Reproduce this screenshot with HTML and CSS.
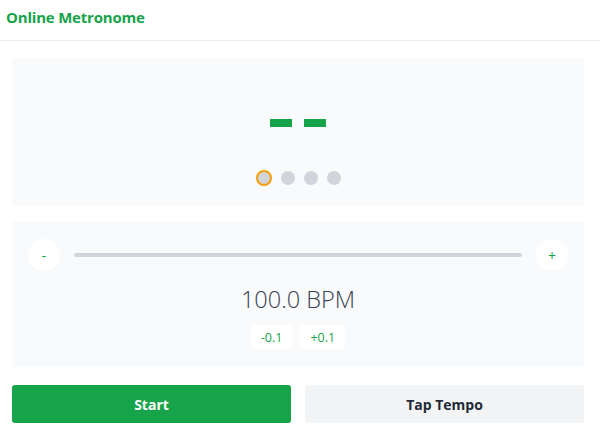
FILE: index.html
```html
<!DOCTYPE html>
<html>
<head>
<meta charset="utf-8">
<link rel="stylesheet" href="styles.css">
</head>
<body>
<header class="header"><h1 class="title">Online Metronome</h1></header>
<main class="main">
  <section class="panel beat-panel">
    <div class="dashes"><span class="dash"></span><span class="dash"></span></div>
    <div class="dots">
      <span class="dot active"></span><span class="dot"></span><span class="dot"></span><span class="dot"></span>
    </div>
  </section>
  <section class="panel tempo-panel">
    <div class="slider-row">
      <button class="round-btn">-</button>
      <div class="track"></div>
      <button class="round-btn">+</button>
    </div>
    <div class="bpm">100.0 BPM</div>
    <div class="fine">
      <button class="fine-btn">-0.1</button>
      <button class="fine-btn">+0.1</button>
    </div>
  </section>
  <div class="actions">
    <button class="btn start">Start</button>
    <button class="btn tap">Tap Tempo</button>
  </div>
</main>
</body>
</html>
```
FILE: styles.css
```css
* { box-sizing: border-box; }
html, body { margin: 0; padding: 0; background: #fff; }
body { font-family: "Open Sans", "Noto Sans", "Liberation Sans", sans-serif; color: #1f2937; width: 600px; height: 435px; overflow: hidden; }
.header { height: 41px; border-bottom: 1px solid #e8eaed; display: flex; align-items: center; padding-left: 6px; padding-bottom: 6px; }
.title { margin: 0; font-size: 15px; font-weight: 700; color: #16a34a; letter-spacing: -0.2px; }
.main { padding: 17px 16px 0 12px; display: flex; flex-direction: column; gap: 16px; }
.panel { background: #f9fafb; }
.beat-panel { height: 148px; display: flex; flex-direction: column; align-items: center; padding-top: 61px; }
.dashes { display: flex; gap: 12px; }
.dash { width: 22px; height: 8px; background: #16a34a; }
.dots { display: flex; gap: 9px; margin-top: 44px; }
.dot { width: 14px; height: 14px; border-radius: 50%; background: #d1d5db; }
.dot.active { width: 16px; height: 16px; border: 2px solid #f59e0b; margin-top: -1px; }
.tempo-panel { height: 145px; display: flex; flex-direction: column; align-items: center; padding: 17px 0 0; }
.slider-row { width: 100%; display: flex; align-items: center; padding: 0 16px; gap: 14px; }
.round-btn { width: 32px; height: 32px; border-radius: 50%; border: none; background: #fff; color: #16a34a; font-family: inherit; font-size: 14px; padding: 0; display: flex; align-items: center; justify-content: center; }
.track { flex: 1; height: 4px; border-radius: 2px; background: #d1d5db; }
.bpm { margin-top: 12px; font-size: 23.5px; font-weight: 300; color: #374151; }
.fine { display: flex; gap: 8px; margin-top: 10px; }
.fine-btn { height: 24px; padding: 0 10px; border: none; background: #fff; border-radius: 3px; color: #16a34a; font-family: inherit; font-size: 12.5px; }
.actions { display: flex; gap: 14px; margin-top: 2px; }
.btn { flex: 1; height: 38px; border: none; border-radius: 3px; font-family: inherit; font-size: 14px; font-weight: 700; }
.start { background: #16a34a; color: #fff; }
.tap { background: #f3f4f6; color: #1f2937; }
```
